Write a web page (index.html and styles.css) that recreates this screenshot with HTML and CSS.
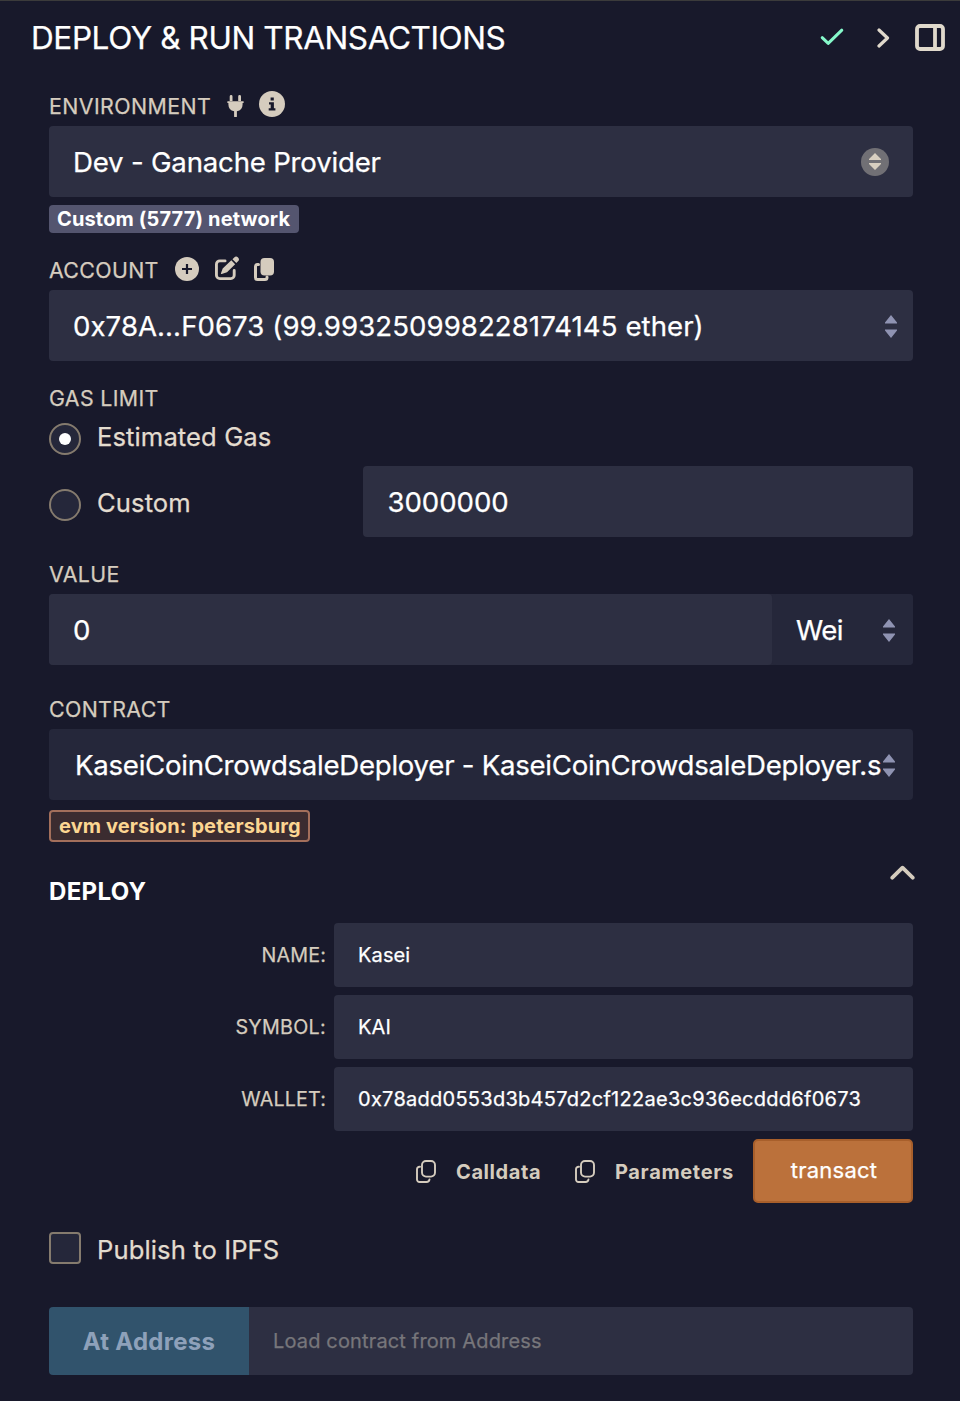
FILE: index.html
```html
<!DOCTYPE html>
<html lang="en">
<head>
<meta charset="utf-8">
<title>Deploy &amp; Run Transactions</title>
<link rel="stylesheet" href="styles.css">
</head>
<body>
<svg width="0" height="0" class="defs">
  <symbol id="sort" viewBox="0 0 12 23"><path d="M6 0 12 7.6V8.6H0V7.6ZM0 14.6H12V15.6L6 23 0 15.6Z"/></symbol>
  <symbol id="copy" viewBox="0 0 20 23"><rect x="6" y="1" width="13" height="15.6" rx="4"/><path d="M4 6.7H3.5a2.5 2.5 0 0 0-2.5 2.5V19.5A2.5 2.5 0 0 0 3.500 22H10.500a3 3 0 0 0 3-2.600"/></symbol>
</svg>
<main class="panel">
  <header class="header">
    <h1 class="title">DEPLOY &amp; RUN TRANSACTIONS</h1>
    <div class="header-icons">
      <svg class="ic-check" width="24" height="18" viewBox="0 0 24 18"><path d="M2.200 9.700 8.200 15.400 21.800 2.200"/></svg>
      <svg class="ic-next" width="13" height="20" viewBox="0 0 13 20"><path d="M2 2 10.500 10 2 18"/></svg>
      <svg class="ic-panel" width="30" height="27" viewBox="0 0 30 27"><rect x="2" y="2" width="26" height="23" rx="3"/><path d="M20 2V25"/></svg>
    </div>
  </header>

  <div class="body">
    <div class="label"><span class="t-env">ENVIRONMENT</span>
      <svg class="ic ic-plug" width="17" height="22" viewBox="0 0 17 22"><path d="M2.700 6V1.400a1.400 1.400 0 0 1 2.800 0V6ZM11.200 6V1.400a1.400 1.400 0 0 1 2.800 0V6ZM1 6.200H16a.8.8 0 0 1 0 1.700H15.600V9.500a7 7 0 0 1-5.700 6.800V21.200a1 1 0 0 1-2.800 0V16.300A7 7 0 0 1 1.400 9.500V7.900H1A.8.8 0 0 1 1 6.200Z"/></svg>
      <svg class="ic ic-info" width="26" height="26" viewBox="0 0 26 26"><circle cx="13" cy="13" r="13"/><path class="cut" d="M11.600 6.600h3.200v3h-3.200ZM10 11.200h4.900v6.100h1.500v2.200H9.700v-2.200h2v-3.900H10Z"/></svg>
    </div>
    <div class="field"><span class="t-dev">Dev - Ganache Provider</span><span class="knob"><svg width="12" height="17" viewBox="0 0 12 17"><path d="M6 0 12 6V7H0V6ZM0 10H12V11L6 17 0 11Z"/></svg></span></div>
    <div class="badge network">Custom (5777) network</div>

    <div class="label label-account"><span class="t-acc">ACCOUNT</span>
      <svg class="ic ic-plus" width="24" height="24" viewBox="0 0 24 24"><circle cx="12" cy="12" r="12"/><path class="cut" d="M10.900 7h2.200v3.900H17v2.200h-3.900V17h-2.200v-3.900H7v-2.200h3.900Z"/></svg>
      <svg class="ic ic-edit" width="24" height="25" viewBox="0 0 25 25"><path class="line" d="M10.500 4.600H5A3.500 3.500 0 0 0 1.500 8V19.500A3.500 3.500 0 0 0 5 23H16.500A3.500 3.500 0 0 0 20 19.500V14.500"/><path d="M17 4 21 8 12.500 16.500 7 18.200a.6.6 0 0 1-.8-.8L8 12.500ZM18.200 2.800 20 1a2.800 2.800 0 0 1 4 4L22.200 6.800Z"/></svg>
      <svg class="ic ic-clone" width="20" height="23" viewBox="0 0 20 23"><rect x="6.500" y="0" width="13.500" height="17.500" rx="4"/><path class="line" d="M4.500 6.500H3.500A2 2 0 0 0 1.500 8.500V19.500A2 2 0 0 0 3.500 21.500H11A2 2 0 0 0 13 19.500V19"/></svg>
    </div>
    <div class="field field-account"><span class="t-addr">0x78A...F0673 (99.993250998228174145 ether)</span><svg class="sort" width="12" height="23"><use href="#sort"/></svg></div>

    <div class="label label-gas"><span class="t-gas">GAS LIMIT</span></div>
    <div class="option option-estimated"><span class="radio checked"></span><span class="option-text">Estimated Gas</span></div>
    <div class="custom-row">
      <div class="option"><span class="radio"></span><span class="option-text">Custom</span></div>
      <div class="field field-gas"><span class="t-num">3000000</span></div>
    </div>

    <div class="label label-value"><span class="t-val">VALUE</span></div>
    <div class="value-row">
      <div class="field field-value"><span>0</span></div>
      <div class="field field-unit dark"><span>Wei</span><svg class="sort" width="12" height="23"><use href="#sort"/></svg></div>
    </div>

    <div class="label label-contract"><span class="t-con">CONTRACT</span></div>
    <div class="field field-contract dark"><span>KaseiCoinCrowdsaleDeployer - KaseiCoinCrowdsaleDeployer.s</span><svg class="sort" width="12" height="23"><use href="#sort"/></svg></div>
    <div class="badge evm">evm version: petersburg</div>

    <div class="deploy-head">
      <h2 class="deploy-title">DEPLOY</h2>
      <svg class="ic-up" width="25" height="15" viewBox="0 0 25 15"><path d="M2.300 12.700 12.500 2.700 22.700 12.700"/></svg>
    </div>
    <div class="params">
      <label class="p-name">NAME:</label><div class="input i-name">Kasei</div>
      <label class="p-symbol">SYMBOL:</label><div class="input i-name">KAI</div>
      <label class="p-wallet">WALLET:</label><div class="input i-wallet">0x78add0553d3b457d2cf122ae3c936ecddd6f0673</div>
    </div>
    <div class="actions">
      <span class="copy-action calldata"><svg class="copy" width="20" height="23"><use href="#copy"/></svg><span>Calldata</span></span>
      <span class="copy-action parameters"><svg class="copy" width="20" height="23"><use href="#copy"/></svg><span>Parameters</span></span>
      <button class="transact">transact</button>
    </div>

    <div class="option publish"><span class="checkbox"></span><span class="option-text">Publish to IPFS</span></div>
    <div class="address-row">
      <button class="at-address">At Address</button>
      <div class="address-input">Load contract from Address</div>
    </div>
  </div>
</main>
</body>
</html>
```
FILE: styles.css
```css
* { box-sizing: border-box; }
body {
  margin: 0;
  background: #18192b;
  color: #fff;
  font-family: Inter, "Liberation Sans", sans-serif;
  -webkit-text-stroke: .25px currentColor;
}
.defs { position: absolute; }
svg { display: block; flex: none; }
span, label, h1, h2 { white-space: nowrap; }
.panel { height: 1401px; border-top: 1px solid #3b3b3b; overflow: hidden; }

.header { display: flex; justify-content: space-between; height: 85px; padding: 0 15px 0 31px; }
.title { margin: 0; font-size: 31.5px; font-weight: 400; line-height: 74px; letter-spacing: -.39px; }
.header-icons { display: flex; align-items: center; height: 73px; }
.header-icons path, .header-icons rect, .ic-up path { fill: none; stroke: #e0d9cc; stroke-width: 3.2; stroke-linecap: round; stroke-linejoin: round; }
.header-icons .ic-check path { stroke: #86f9cb; stroke-width: 3; }
.header-icons .ic-panel rect, .header-icons .ic-panel path { stroke-width: 3.8; }
.header-icons .ic-panel path { stroke-linecap: butt; }
.ic-check { margin-top: -1px; }
.ic-next { margin: 0 25px 0 33px; }

.body { padding: 0 47px 0 49px; }
.label { display: flex; align-items: center; height: 40px; color: #d5ccbe; font-size: 21.34px; line-height: 40px; letter-spacing: .37px; }
.t-env { letter-spacing: .44px; }
.ic { fill: #d5ccbe; }
.cut { fill: #18192b; }
.line { fill: none; stroke: #d5ccbe; stroke-width: 3; stroke-linecap: round; }
.ic-plug { margin: -1px 15px 0 15.500px; }
.ic-info { margin-top: -4px; }
.label-account { margin-top: 17px; }
.ic-plus { margin: -2px 16px 0 16px; }
.ic-edit { margin: -3px 15.500px 0 0; }
.ic-clone { margin-top: -1px; }
.label-gas, .label-value { margin-top: 17px; }
.label-contract { margin-top: 24px; }

.field {
  display: flex; align-items: center; justify-content: space-between;
  height: 71px; padding: 1px 24px 0; border-radius: 4px;
  background: #2d2f42; font-size: 27.6px; line-height: 70px; letter-spacing: -.2px;
}
.dark { background: #25273a; }
.sort { fill: #8f93b2; }
.knob { display: flex; align-items: center; justify-content: center; width: 28px; height: 28px; margin-top: -1px; border-radius: 50%; background: #717075; fill: #d8cfc0; }
.t-addr { letter-spacing: .06px; }
.field-account { padding-right: 16px; }
.t-num { letter-spacing: -.05px; }

.badge { width: 250px; height: 28px; margin-top: 8px; border-radius: 4px; font-size: 20px; font-weight: 700; line-height: 28px; white-space: nowrap; -webkit-text-stroke: 0; }
.network { padding-left: 8px; background: #54556f; letter-spacing: .14px; }
.evm { width: 261px; height: 32px; margin-top: 10px; padding-left: 8px; border: 2px solid #a36f5b; background: #3b2c30; color: #fcd692; letter-spacing: .11px; }

.option { display: flex; color: #e3dccf; font-size: 25.6px; letter-spacing: .1px; }
.option-text { line-height: 32px; }
.radio, .checkbox { flex: none; width: 32px; height: 32px; margin-right: 16px; border: 2px solid #857b6e; background: #25273a; }
.radio { display: flex; align-items: center; justify-content: center; border-radius: 50%; }
.checked::after { content: ""; width: 12px; height: 12px; border-radius: 50%; background: #fff; }
.checkbox { border-radius: 4px; }
.option-estimated { height: 48px; padding-top: 5px; }
.option-estimated .option-text, .custom-row .option-text { margin-top: -2px; }
.custom-row { display: grid; grid-template-columns: 314px 1fr; }
.custom-row .option { padding-top: 23px; }
.field-gas { padding-left: 24.500px; }

.value-row { display: grid; grid-template-columns: 723px 1fr; background: #25273a; border-radius: 4px; }
.field-unit { padding: 1px 18px 0 24px; letter-spacing: -.6px; }
.field-contract { padding: 1px 18px 0 26px; letter-spacing: -.26px; }
.field-contract span { width: 808px; }

.deploy-head { display: flex; justify-content: space-between; height: 81px; padding-top: 18px; }
.deploy-title { margin: 0; font-size: 24px; font-weight: 700; line-height: 63px; letter-spacing: .35px; -webkit-text-stroke: 0; }
.ic-up { margin: 5px -2px 0 0; }
.ic-up path { stroke: #d5ccbe; stroke-width: 3.8; }

.params { display: grid; grid-template-columns: 277px 1fr; column-gap: 8px; row-gap: 8px; }
.params label { color: #d5ccbe; font-size: 19.7px; line-height: 64px; text-align: right; letter-spacing: .15px; }
.params .p-symbol { letter-spacing: .3px; }
.input { height: 64px; padding-left: 24px; border-radius: 4px; background: #2d2f42; font-size: 20px; line-height: 64px; letter-spacing: .12px; }
.i-wallet { letter-spacing: .27px; }

.actions { display: flex; align-items: center; justify-content: flex-end; height: 64px; margin-top: 8px; }
.copy-action { display: flex; align-items: center; color: #d5ccbe; font-size: 20px; font-weight: 700; line-height: 66px; letter-spacing: .59px; -webkit-text-stroke: 0; }
.copy-action span { padding-top: 1px; }
.calldata { width: 159px; }
.parameters { width: 178px; letter-spacing: .65px; }
.copy { margin-right: 20px; fill: none; stroke: #d5ccbe; stroke-width: 1.9; stroke-linecap: round; }
.transact { width: 160px; height: 64px; padding: 0 0 2px 2px; border: 2px solid #a85f2b; border-radius: 5px; background: #bb713b; color: #fff; font: 400 22px/58px Inter, sans-serif; letter-spacing: .23px; }

.publish { height: 32px; margin-top: 29px; }
.publish .option-text { line-height: 36px; }
.address-row { display: grid; grid-template-columns: 200px 1fr; height: 68px; margin-top: 43px; border-radius: 4px; overflow: hidden; }
.at-address { padding: 1px 0 0; border: 0; background: #31536c; color: #8ea1ba; font: 700 24px/67px Inter, sans-serif; letter-spacing: .3px; -webkit-text-stroke: 0; }
.address-input { padding-left: 24px; background: #2d2f42; color: #77767b; font-size: 20px; line-height: 68px; letter-spacing: .15px; }
```
